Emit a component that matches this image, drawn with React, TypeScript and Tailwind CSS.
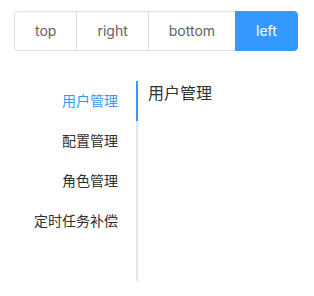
import React, { useState } from 'react';

type Pos = 'top' | 'right' | 'bottom' | 'left';

const positions: Pos[] = ['top', 'right', 'bottom', 'left'];
const tabs = ['用户管理', '配置管理', '角色管理', '定时任务补偿'];

export default function App() {
  const [pos, setPos] = useState<Pos>('left');
  const [active, setActive] = useState(0);

  return (
    <div
      className="pt-[11px] pl-[14px] bg-white min-h-screen"
      style={{ fontFamily: 'Inter, "Noto Sans CJK SC", sans-serif' }}
    >
      <div className="inline-flex mb-[30px]">
        {positions.map((p, i) => {
          const on = p === pos;
          return (
            <button
              key={p}
              onClick={() => setPos(p)}
              className={`h-10 px-5 text-sm leading-none border ${
                i === 0 ? 'rounded-l-[4px]' : '-ml-px'
              } ${i === positions.length - 1 ? 'rounded-r-[4px]' : ''} ${
                on
                  ? 'bg-[#3399ff] border-[#3399ff] text-white relative z-10'
                  : 'bg-white border-[#dcdfe6] text-[#606266]'
              }`}
            >
              {p}
            </button>
          );
        })}
      </div>

      <div className="flex h-[200px]">
        <div className="relative w-[124px] mr-[10px]">
          <div className="absolute right-0 top-0 bottom-0 w-[2px] bg-[#e4e7ed]" />
          <div
            className="absolute right-0 w-[2px] h-10 bg-[#3399ff] z-10"
            style={{ top: active * 40 }}
          />
          {tabs.map((t, i) => (
            <div
              key={t}
              onClick={() => setActive(i)}
              className={`h-10 leading-10 px-5 text-right text-sm cursor-pointer ${
                i === active ? 'text-[#3399ff]' : 'text-[#303133]'
              }`}
            >
              {t}
            </div>
          ))}
        </div>
        <div className="text-base text-[#303133] leading-6">{tabs[active]}</div>
      </div>
    </div>
  );
}
